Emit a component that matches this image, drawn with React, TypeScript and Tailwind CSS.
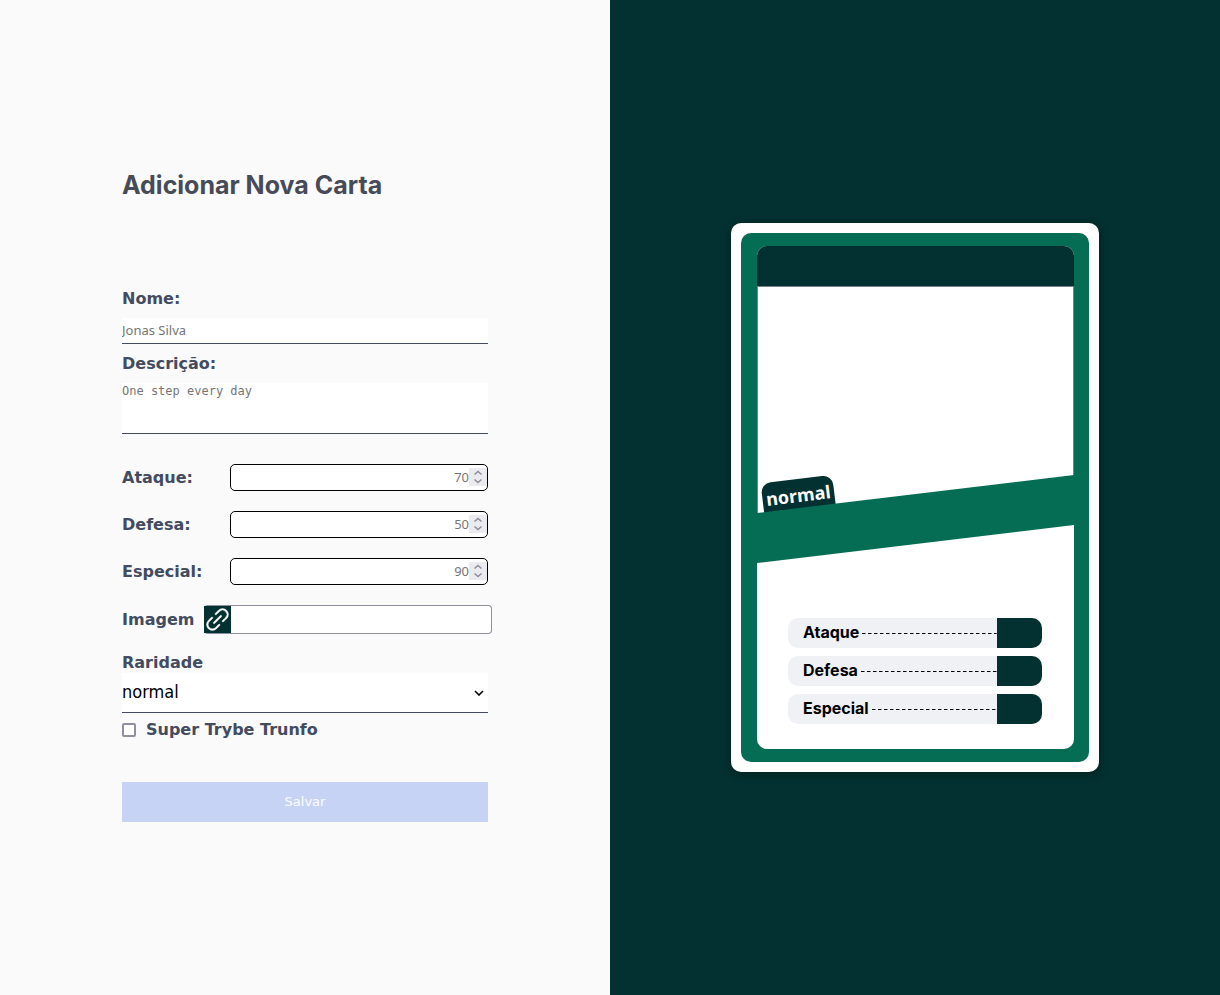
import React from 'react';
import { PiLinkSimple } from 'react-icons/pi';

const labelClass = "font-['DejaVu_Sans',sans-serif] text-base font-bold leading-5 text-[#424b5f]";

function NumberField({ id, label, placeholder }: { id: string; label: string; placeholder: string }) {
  return (
    <div className="flex h-[27px] items-center justify-between">
      <label htmlFor={id} className={labelClass}>{label}</label>
      <div className="relative h-full w-[258px]">
        <input
          id={id}
          type="number"
          placeholder={placeholder}
          className="block h-full w-full appearance-none rounded-[5px] border border-black bg-white pb-[2px] pr-[18px] text-right font-['Noto_Sans',sans-serif] text-[13px] placeholder:text-[#757575] [-moz-appearance:textfield] [&::-webkit-inner-spin-button]:appearance-none"
        />
        <svg aria-hidden="true" viewBox="0 0 18 18" className="pointer-events-none absolute right-px top-1 h-[18px] w-[18px]">
          <rect width="18" height="18" fill="#ebebef" />
          <path d="M5.5 6.5 9 3.5l3.5 3M5.5 11.5 9 14.5l3.5-3" fill="none" stroke="#8f8f9d" strokeWidth="1.6" />
        </svg>
      </div>
    </div>
  );
}

function Attribute({ name }: { name: string }) {
  return (
    <div className="flex h-[30px] items-center overflow-hidden rounded-[10px] bg-[#f0f1f5] pl-[15px]">
      <span className="pb-[2px] font-['Inter',sans-serif] text-base font-bold leading-6 text-black">{name}</span>
      <svg aria-hidden="true" className="ml-[3px] mt-px h-px flex-1">
        <line x1="0" y1="0.5" x2="100%" y2="0.5" stroke="#000" strokeDasharray="3.5 2.5" />
      </svg>
      <span className="h-full w-[45px] bg-[#033030]" />
    </div>
  );
}

export default function App() {
  return (
    <main className="grid min-h-screen grid-cols-2">
      <section className="flex items-center justify-center bg-[#fafafa]">
        <form className="flex w-3/5 flex-col">
          <h1 className="mb-[92px] font-['Inter',sans-serif] text-[25px] font-bold leading-6 text-[#474a57]">Adicionar Nova Carta</h1>

          <label htmlFor="name" className={labelClass}>Nome:</label>
          <input
            id="name"
            type="text"
            placeholder="Jonas Silva"
            className="mt-[9px] h-[26px] w-full border-b border-[#424b5f] bg-white pb-[2px] font-['Noto_Sans',sans-serif] text-[13px] placeholder:text-[#757575]"
          />

          <label htmlFor="description" className={`${labelClass} mt-[10px]`}>Descrição:</label>
          <textarea
            id="description"
            placeholder="One step every day"
            className="mt-[9px] h-[51px] w-full resize-none border-b border-[#424b5f] bg-white font-['DejaVu_Sans_Mono',monospace] text-xs leading-4 placeholder:text-[#757575]"
          />

          <div className="mt-[30px] flex flex-col gap-5">
            <NumberField id="attack" label="Ataque:" placeholder="70" />
            <NumberField id="defense" label="Defesa:" placeholder="50" />
            <NumberField id="special" label="Especial:" placeholder="90" />
          </div>

          <div className="-mr-1 mt-5 flex h-[29px] items-center">
            <label htmlFor="image" className={labelClass}>Imagem</label>
            <div className="ml-auto flex h-full w-[288px] items-center rounded-sm border border-l-0 border-[#8f8f9d] bg-white">
              <span className="flex h-[27px] w-[27px] shrink-0 items-center justify-center bg-[#033030] text-white">
                <PiLinkSimple size={27} strokeWidth={4} />
              </span>
              <input id="image" type="text" className="h-full min-w-0 flex-1 bg-transparent px-1 text-sm" />
            </div>
          </div>

          <label htmlFor="rarity" className={`${labelClass} mt-[19px]`}>Raridade</label>
          <div className="relative">
            <select
              id="rarity"
              className="block h-10 w-full appearance-none border-b border-[#424b5f] bg-white pb-[2px] font-['DejaVu_Sans_Condensed','DejaVu_Sans',sans-serif] text-lg text-black"
            >
              <option>normal</option>
              <option>raro</option>
              <option>muito raro</option>
            </select>
            <svg aria-hidden="true" viewBox="0 0 10 6" className="pointer-events-none absolute right-1 top-[17px] h-[6px] w-[10px]">
              <path d="m1 1 4 4 4-4" fill="none" stroke="#000" strokeWidth="1.6" />
            </svg>
          </div>

          <div className="mt-[7px] flex items-center gap-[10px]">
            <input id="trunfo" type="checkbox" className="h-[14px] w-[14px] appearance-none rounded-[2px] border-2 border-[#8f8f9d] bg-white" />
            <label htmlFor="trunfo" className={labelClass}>Super Trybe Trunfo</label>
          </div>

          <button type="submit" disabled className="mt-[42px] h-10 bg-[#c7d3f5] pb-px font-['DejaVu_Sans',sans-serif] text-[13px] text-white/90">
            Salvar
          </button>
        </form>
      </section>

      <section className="flex items-center justify-center bg-[#033030]">
        <article className="w-[368px] rounded-[10px] bg-white p-[10px] shadow-[0_2px_8px_rgba(0,0,0,0.35)]">
          <div className="rounded-[10px] bg-[#056d54] py-[13px] pl-4 pr-[15px]">
            <div className="overflow-hidden rounded-[10px] bg-white">
              <div className="h-10 bg-[#033030]" />
              <div className="relative">
                <div className="h-[227px] border border-b-0 border-[#7a8088]" />
                <span className="absolute bottom-[-10px] left-[6px] flex h-11 w-[72px] -rotate-7 justify-center rounded-[10px] bg-[#033030] pt-1 font-['Noto_Sans',sans-serif] text-lg font-bold leading-6 text-white">
                  normal
                </span>
              </div>
              <div className="relative -mt-[38px] h-[88px] bg-[#056d54] [clip-path:polygon(0_38px,100%_0,100%_50px,0_88px)]" />
              <div className="flex flex-col gap-2 px-8 pb-[25px] pl-[31px] pt-[55px]">
                <Attribute name="Ataque" />
                <Attribute name="Defesa" />
                <Attribute name="Especial" />
              </div>
            </div>
          </div>
        </article>
      </section>
    </main>
  );
}
